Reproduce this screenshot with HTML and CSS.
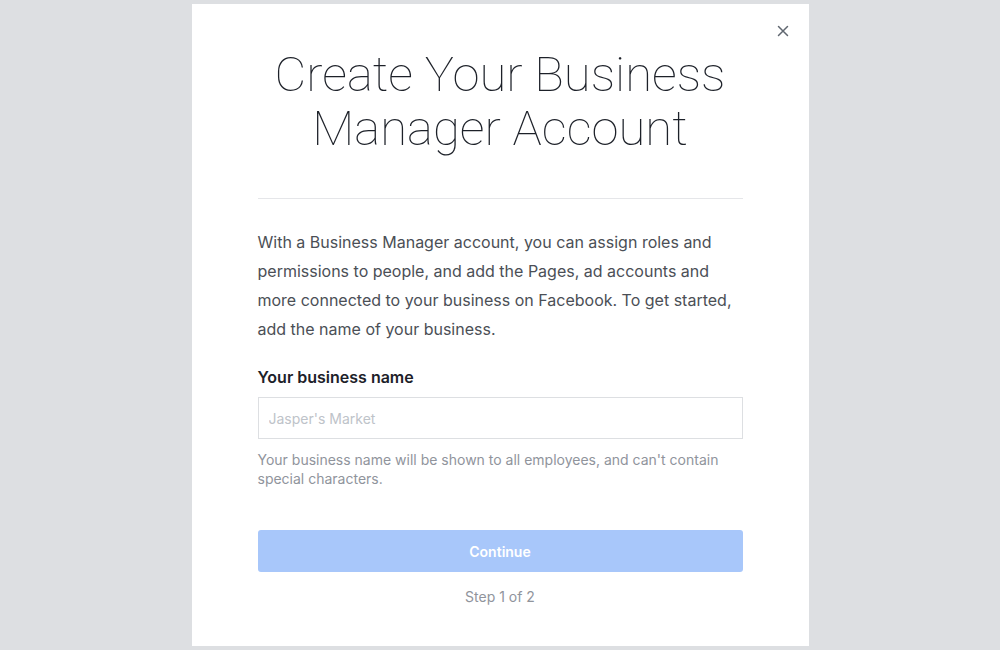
FILE: index.html
```html
<!DOCTYPE html>
<html lang="en">
<head>
  <meta charset="UTF-8">
  <title>Create Your Business Manager Account</title>
  <link rel="stylesheet" href="styles.css">
</head>
<body>

<div class="dialog">
  <button class="close" aria-label="Close">
    <svg width="12" height="12" viewBox="0 0 12 12"><path d="M1.5 1.5L10.5 10.5M10.5 1.5L1.5 10.5" stroke="#606770" stroke-width="1.5" stroke-linecap="round"/></svg>
  </button>

  <h1>Create Your Business<br>Manager Account</h1>

  <hr class="divider">

  <p class="intro">With a Business Manager account, you can assign roles and permissions to people, and add the Pages, ad accounts and more connected to your business on Facebook. To get started, add the name of your business.</p>

  <div class="field">
    <label for="bizname">Your business name</label>
    <input type="text" id="bizname" placeholder="Jasper's Market">
    <p class="hint">Your business name will be shown to all employees, and can't contain special characters.</p>
  </div>

  <button class="continue" disabled>Continue</button>
  <div class="step">Step 1 of 2</div>
</div>

</body>
</html>
```

FILE: styles.css
```css
html, body {
  height: 100%;
}
body {
  margin: 0;
  background: #dddfe2;
  font-family: Inter, "Liberation Sans", Arial, sans-serif;
  display: flex;
  justify-content: center;
  padding-top: 4px;
  box-sizing: border-box;
}
.dialog {
  position: relative;
  width: 617px;
  height: 642px;
  background: #fff;
  padding: 0 66px;
  box-sizing: border-box;
}
.close {
  position: absolute;
  top: 21px;
  right: 20px;
  background: none;
  border: none;
  padding: 0;
  cursor: pointer;
}
h1 {
  margin: 44px 0 0;
  font-family: Roboto, "Liberation Sans", sans-serif;
  font-weight: 100;
  font-size: 49px;
  line-height: 54px;
  color: #1d2129;
  text-align: center;
}
.divider {
  border: none;
  border-top: 1px solid #e5e6e9;
  margin: 42px 0 0;
}
.intro {
  margin: 29px 0 0;
  font-size: 16px;
  line-height: 29px;
  color: #4b4f56;
}
.field {
  margin-top: 23px;
}
.field label {
  display: block;
  font-weight: 600;
  font-size: 16px;
  color: #1d2129;
  margin-bottom: 10px;
}
.field input {
  display: block;
  width: 100%;
  height: 42px;
  box-sizing: border-box;
  border: 1px solid #dddfe2;
  padding: 0 10px;
  font-family: inherit;
  font-size: 14px;
  color: #1d2129;
  outline: none;
}
.field input::placeholder {
  color: #bec3c9;
}
.hint {
  margin: 11px 0 0;
  font-size: 14px;
  line-height: 19px;
  color: #90949c;
}
.continue {
  display: block;
  width: 100%;
  height: 42px;
  margin-top: 42px;
  border: none;
  border-radius: 3px;
  background: #a8c7fa;
  color: #fff;
  font-family: inherit;
  font-weight: 600;
  font-size: 14px;
}
.step {
  margin-top: 16px;
  text-align: center;
  font-size: 14px;
  color: #90949c;
}
```
